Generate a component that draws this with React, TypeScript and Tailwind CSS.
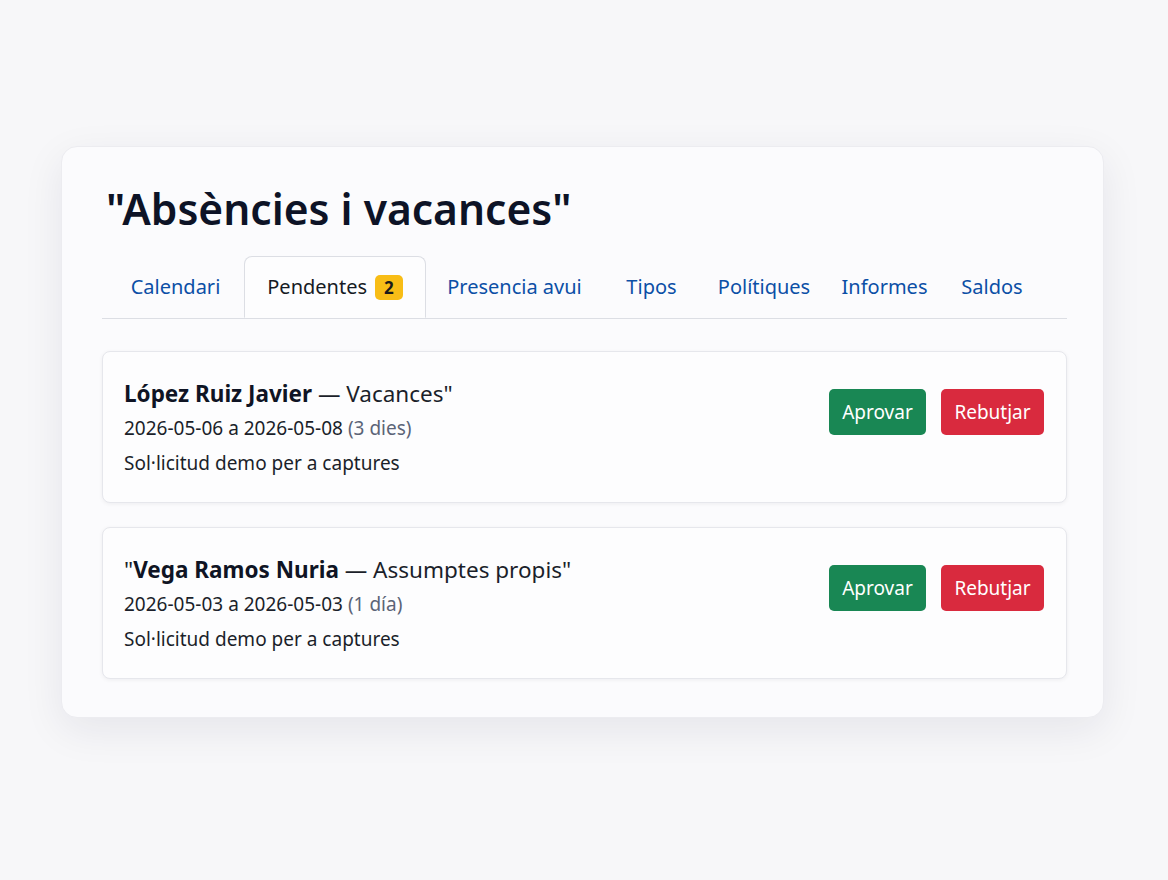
const TABS: { label: string; w: string }[] = [
  { label: "Calendari", w: "w-[142px] pl-[5px]" },
  { label: "Pendentes", w: "w-[182px]" },
  { label: "Presencia avui", w: "w-[177px]" },
  { label: "Tipos", w: "w-[97px]" },
  { label: "Polítiques", w: "w-[128px]" },
  { label: "Informes", w: "w-[113px]" },
  { label: "Saldos", w: "w-[102px]" },
]

type Request = {
  lead: string
  name: string
  kind: string
  from: string
  to: string
  days: string
  note: string
}

const REQUESTS: Request[] = [
  { lead: "", name: "López Ruiz Javier", kind: 'Vacances"', from: "2026-05-06", to: "2026-05-08", days: "(3 dies)", note: "Sol·licitud demo per a captures" },
  { lead: '"', name: "Vega Ramos Nuria", kind: 'Assumptes propis"', from: "2026-05-03", to: "2026-05-03", days: "(1 día)", note: "Sol·licitud demo per a captures" },
]

function RequestCard({ r }: { r: Request }) {
  return (
    <div className="flex items-start justify-between rounded-lg border border-[#e6e7ec] bg-[#fdfdfe] pb-[21px] pl-[21px] pr-[22px] pt-[24px] shadow-[0_1px_4px_rgba(20,24,40,0.06)]">
      <div className="text-[19px] leading-[35px] text-[#1b1f2a]">
        <div className="text-[22.5px]">
          {r.lead}
          <span className="font-bold text-[#0f1424]">{r.name}</span> — {r.kind}
        </div>
        <div>
          {r.from} a {r.to} <span className="text-[#5b6477]">{r.days}</span>
        </div>
        <div>{r.note}</div>
      </div>
      <div className="mt-[13px] flex gap-[15px]">
        <button className="h-[46px] w-[97px] rounded-[5px] bg-[#198754] text-[19px] text-white">Aprovar</button>
        <button className="h-[46px] w-[103px] rounded-[5px] bg-[#d92a3e] text-[19px] text-white">Rebutjar</button>
      </div>
    </div>
  )
}

export default function App() {
  return (
    <div className="min-h-[880px] bg-[#f7f7f9] pt-[146px] font-['Noto_Sans',sans-serif]">
      <div className="ml-[61px] w-[1043px] rounded-2xl border border-[#ececf0] bg-[#fbfbfd] pb-[38px] pl-[40px] pr-[36px] pt-[33px] shadow-[0_12px_40px_rgba(30,30,60,0.08)]">
        <h1 className="pl-[4px] text-[42.5px] font-semibold leading-[58px] text-[#0d1326]">"Absències i vacances"</h1>
        <div className="mt-[18px] flex border-b border-[#dcdee4]">
          {TABS.map((t) =>
            t.label === "Pendentes" ? (
              <div key={t.label} className={`${t.w} -mb-px flex h-[62px] items-center justify-center gap-[8px] rounded-t-lg border border-[#dcdee4] border-b-[#fdfdfe] bg-[#fdfdfe] text-[20px] text-[#161a24]`}>
                {t.label}
                <span className="rounded-[5px] bg-[#f8bd16] px-[9px] text-[17px] font-bold leading-[25px] text-[#1a1a1a]">2</span>
              </div>
            ) : (
              <div key={t.label} className={`${t.w} flex h-[62px] items-center justify-center text-[20px] text-[#0b4fa6]`}>
                {t.label}
              </div>
            )
          )}
        </div>
        <div className="mt-[32px] flex flex-col gap-[24px]">
          {REQUESTS.map((r) => (
            <RequestCard key={r.name} r={r} />
          ))}
        </div>
      </div>
    </div>
  )
}
